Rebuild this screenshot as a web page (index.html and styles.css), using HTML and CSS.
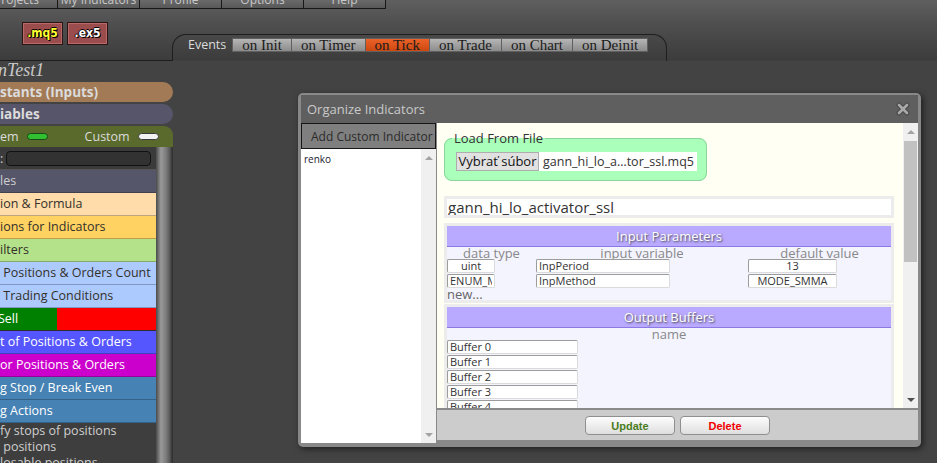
FILE: index.html
```html
<!DOCTYPE html>
<html>
<head>
  <title>Indicator Builder - Organize Indicators</title>
  <link rel="stylesheet" href="styles.css">
</head>
<body>
  <div class="menubar">
    <div class="menu-item first"><span>Projects</span></div>
    <div class="menu-item"><span>My Indicators</span></div>
    <div class="menu-item"><span>Profile</span></div>
    <div class="menu-item"><span>Options</span></div>
    <div class="menu-item"><span>Help</span></div>
  </div>

  <div class="toolbar">
    <div class="toolbar-left">
      <span class="filebtn mq5">.mq5</span>
      <span class="filebtn ex5">.ex5</span>
    </div>
    <div class="events-tab">
      <span class="events-label">Events</span>
      <button class="event">on Init</button>
      <button class="event">on Timer</button>
      <button class="event active">on Tick</button>
      <button class="event">on Trade</button>
      <button class="event">on Chart</button>
      <button class="event">on Deinit</button>
    </div>
  </div>

  <div class="sidebar">
    <div class="project-name">nTest1</div>
    <div class="group constants">stants (Inputs)</div>
    <div class="group variables">iables</div>
    <div class="group switch">
      <span>em</span><span class="pill on"></span>
      <span class="custom-label">Custom</span><span class="pill"></span>
    </div>
    <div class="sidebar-body">
      <div class="blocks">
        <div class="search">:<input type="text"></div>
        <div class="block b-vars">les</div>
        <div class="block b-expr">ion &amp; Formula</div>
        <div class="block b-cond">ions for Indicators</div>
        <div class="block b-filter">ilters</div>
        <div class="block b-check">&nbsp;Positions &amp; Orders Count</div>
        <div class="block b-check">&nbsp;Trading Conditions</div>
        <div class="block b-buysell"><span class="buy">Sell</span><span class="sell"></span></div>
        <div class="block b-list">t of Positions &amp; Orders</div>
        <div class="block b-loop">or Positions &amp; Orders</div>
        <div class="block b-trail">g Stop / Break Even</div>
        <div class="block b-trade">g Actions</div>
        <div class="action">fy stops of positions</div>
        <div class="action">&nbsp;positions</div>
        <div class="action">losable positions</div>
      </div>
      <div class="sidebar-scroll"></div>
    </div>
  </div>

  <div class="dialog">
    <div class="dialog-title">
      <span>Organize Indicators</span>
      <svg class="close" width="14" height="14" viewBox="0 0 14 14">
        <path d="M3 3 L11 11 M11 3 L3 11" stroke="#4a4a4a" stroke-width="5" stroke-linecap="round"/>
        <path d="M3 3 L11 11 M11 3 L3 11" stroke="#a9a9a9" stroke-width="2.6" stroke-linecap="round"/>
      </svg>
    </div>
    <div class="dialog-body">
      <div class="ind-column">
        <button class="add-custom">Add Custom Indicator</button>
        <div class="ind-list">
          <div class="ind-items">
            <div class="ind-item">renko</div>
          </div>
          <div class="scrollbar">
            <span class="arrow up"></span>
            <span class="spacer"></span>
            <span class="arrow down"></span>
          </div>
        </div>
      </div>

      <div class="editor">
        <div class="editor-view">
          <div class="editor-content">
            <fieldset class="load-file">
              <legend>Load From File</legend>
              <div class="file-input">
                <span class="file-btn">Vybrať súbor</span>
                <span class="file-name">gann_hi_lo_a…tor_ssl.mq5</span>
              </div>
            </fieldset>

            <input class="ind-name" type="text" value="gann_hi_lo_activator_ssl">

            <div class="section">
              <div class="section-head">Input Parameters</div>
              <div class="params">
                <div class="col-head">data type</div>
                <div class="col-head">input variable</div>
                <div class="col-head">default value</div>

                <div><input class="p-type" type="text" value="uint"></div>
                <div><input class="p-name" type="text" value="InpPeriod"></div>
                <div><input class="p-value" type="text" value="13"></div>

                <div><input class="p-type" type="text" value="ENUM_MA_METHOD"></div>
                <div><input class="p-name" type="text" value="InpMethod"></div>
                <div><input class="p-value" type="text" value="MODE_SMMA"></div>
              </div>
              <div class="new-link">new...</div>
            </div>

            <div class="section">
              <div class="section-head">Output Buffers</div>
              <div class="col-head">name</div>
              <input class="buffer" type="text" value="Buffer 0">
              <input class="buffer" type="text" value="Buffer 1">
              <input class="buffer" type="text" value="Buffer 2">
              <input class="buffer" type="text" value="Buffer 3">
              <input class="buffer" type="text" value="Buffer 4">
              <input class="buffer" type="text" value="Buffer 5">
            </div>
          </div>
          <div class="scrollbar">
            <span class="arrow up"></span>
            <span class="thumb"></span>
            <span class="spacer"></span>
            <span class="arrow down dark"></span>
          </div>
        </div>
        <div class="dialog-footer">
          <button class="footer-btn update">Update</button>
          <button class="footer-btn delete">Delete</button>
        </div>
      </div>
    </div>
  </div>
</body>
</html>
```

FILE: styles.css
```css
body {
  margin: 0;
  height: 463px;
  overflow: hidden;
  font-family: "Open Sans", "Noto Sans", sans-serif;
  background: #434343 linear-gradient(#5f5f5f 0, #4e4e4e 25px, #3c3c3c 60px, #434343 61px) no-repeat;
  background-size: 100% 100%;
}

/* top menu, mostly scrolled out of view */
.menubar {
  display: flex;
  height: 8px;
  width: 386px;
  border-bottom: 1px solid #181818;
  overflow: hidden;
}
.menu-item {
  width: 81px;
  flex: none;
  border-right: 1px solid #181818;
  background: linear-gradient(#6a6a6a, #585858);
  color: #c8c8c8;
  font-size: 12px;
  text-align: center;
  overflow: hidden;
}
.menu-item span {
  display: block;
  margin-top: -8px;
  line-height: 16px;
  white-space: nowrap;
}
.menu-item.first {
  margin-left: -24px;
}

/* toolbar with file buttons and event tabs */
.toolbar {
  display: flex;
  height: 52px;
}
.toolbar-left {
  width: 172px;
  height: 52px;
  box-sizing: border-box;
  border-bottom: 1px solid #1e1e1e;
  padding: 13px 0 0 22px;
  display: flex;
  gap: 4px;
  align-items: flex-start;
}
.filebtn {
  width: 41px;
  height: 23px;
  box-sizing: border-box;
  border: 1px solid #2a1414;
  box-shadow: inset 0 0 0 1px #b86a6a;
  background: #9b4d4d;
  font: bold 12px "DejaVu Sans Condensed", "DejaVu Sans", sans-serif;
  line-height: 21px;
  text-align: center;
  text-shadow: 1px 1px 0 #000, -1px 0 0 #000, 0 -1px 0 #000;
}
.mq5 { color: #ffff30; }
.ex5 { color: #ffffff; }

.events-tab {
  margin-top: 25px;
  width: 495px;
  height: 27px;
  box-sizing: border-box;
  border: 1px solid #1e1e1e;
  border-bottom: none;
  border-radius: 14px 14px 0 0;
  padding: 3px 0 0 15px;
  display: flex;
  align-items: flex-start;
}
.events-label {
  color: #dcdcdc;
  font-size: 12.5px;
  line-height: 13px;
  margin-right: 7px;
}
.event {
  font-family: "Liberation Serif", serif;
  font-size: 15px;
  line-height: 12px;
  height: 14px;
  padding: 0 9px;
  margin: 0 0 0 -1px;
  border: 1px solid #606060;
  background: linear-gradient(#b6b6b6, #8c8c8c);
  color: #1a1a1a;
}
.event.active {
  background: linear-gradient(#ec6228, #cc4810);
}

/* left side panel */
.sidebar {
  width: 173px;
  height: 402px;
  display: flex;
  flex-direction: column;
}
.sidebar > * {
  flex: none;
}
.project-name {
  height: 20px;
  line-height: 19px;
  font-family: "Liberation Serif", serif;
  font-style: italic;
  font-size: 18px;
  color: #c8c8c8;
  text-indent: -2px;
  overflow: hidden;
}
.group {
  height: 20px;
  line-height: 20px;
  font-size: 13.5px;
  font-weight: bold;
  color: #dcdcdc;
  border-radius: 0 10px 10px 0;
  margin-top: 1px;
  white-space: nowrap;
}
.constants { background: #a27a56; }
.variables { background: #56556a; margin-top: 2px; }
.switch {
  margin-top: 2px;
  height: 21px;
  line-height: 21px;
  border-radius: 0 9px 0 0;
  background: #5a6a2c;
  font-weight: normal;
  font-size: 12.5px;
  display: flex;
  align-items: center;
}
.pill {
  width: 21px;
  height: 7px;
  box-sizing: border-box;
  border-radius: 4px;
  border: 1px solid #3a3a3a;
  background: #f2f2f2;
}
.pill.on {
  background: #30c030;
  border-color: #184818;
  margin-left: 8px;
}
.custom-label {
  margin-left: 37px;
  margin-right: 8px;
}

.sidebar-body {
  flex: 1 1 0;
  min-height: 0;
  overflow: hidden;
  display: flex;
  background: #3e3e3e;
}
.blocks {
  width: 156px;
  font-size: 12.5px;
  white-space: nowrap;
  overflow: hidden;
}
.search {
  height: 22px;
  border-bottom: 1px solid #555;
  background: #3b3b3b;
  color: #cfcfcf;
  display: flex;
  align-items: center;
  gap: 3px;
}
.search input {
  width: 145px;
  height: 15px;
  box-sizing: border-box;
  border: 1px solid #111;
  border-radius: 4px;
  background: #323232;
  padding: 0;
}
.block {
  height: 22px;
  line-height: 22px;
  border-bottom: 1px solid rgba(0, 0, 0, 0.25);
  color: #33302a;
}
.b-vars { background: #56566a; color: #cfcfcf; }
.b-expr { background: #ffdcaa; }
.b-cond { background: #ffd262; }
.b-filter { background: #b3e28a; }
.b-check { background: #adcaff; }
.b-buysell { display: flex; color: #fff; }
.b-buysell .buy { width: 57px; background: #008000; text-indent: -2px; }
.b-buysell .sell { flex: 1; background: #ff0000; }
.b-list { background: #5656ff; color: #fff; }
.b-loop { background: #cc00cc; color: #fff; }
.b-trail { background: #4682b4; color: #fff; }
.b-trade { background: #4682b4; color: #fff; }
.action {
  line-height: 16px;
  color: #cfcfcf;
}
.sidebar-scroll {
  width: 17px;
  background: linear-gradient(to right, #4a4a4a 0, #6a6a6a 2px, #9a9a9a 5px, #7c7c7c 10px, #565656 14px, #333 16px, #333 17px);
}

/* Organize Indicators dialog */
.dialog {
  position: absolute;
  left: 298px;
  top: 93px;
  width: 623px;
  height: 354px;
  box-sizing: border-box;
  padding: 2px 3px 4px;
  background: #898989;
  border-radius: 5px;
  box-shadow: 2px 2px 6px rgba(0, 0, 0, 0.55);
  display: flex;
  flex-direction: column;
}
.dialog-title {
  height: 28px;
  flex: none;
  background: #5f5f5f;
  display: flex;
  align-items: center;
  justify-content: space-between;
  padding: 0 8px 0 6px;
  color: #c9c9c9;
  font-size: 13px;
}
.dialog-body {
  flex: 1;
  display: flex;
  gap: 1px;
  min-height: 0;
}
.ind-column {
  width: 135px;
  display: flex;
  flex-direction: column;
}
.add-custom {
  height: 26px;
  flex: none;
  border: 1px solid #161616;
  background: #7f7f7f;
  color: #2b2b2b;
  font-family: "Open Sans", sans-serif;
  font-size: 12px;
  white-space: nowrap;
  text-align: left;
  padding: 0 0 0 9px;
}
.ind-list {
  flex: 1;
  display: flex;
  background: #fff;
}
.ind-items {
  flex: 1;
  padding: 3px 0 0 3px;
  font-size: 10px;
  color: #202030;
}
.scrollbar {
  width: 15px;
  flex: none;
  background: #f0f0f0;
  display: flex;
  flex-direction: column;
  align-items: center;
}
.arrow {
  width: 15px;
  height: 17px;
  display: flex;
  align-items: center;
  justify-content: center;
}
.arrow::after {
  content: "";
  border-left: 4px solid transparent;
  border-right: 4px solid transparent;
}
.arrow.up::after { border-bottom: 4px solid #a3a3a3; }
.arrow.down::after { border-top: 4px solid #a3a3a3; }
.arrow.down.dark::after { border-top-color: #505050; }
.spacer { flex: 1; }
.thumb {
  width: 13px;
  height: 121px;
  margin-top: 1px;
  background: #c1c1c1;
}

.editor {
  flex: 1;
  display: flex;
  flex-direction: column;
  margin-bottom: 3px;
}
.editor-view {
  flex: 1;
  display: flex;
  min-height: 0;
  background: #fffff4;
}
.editor-content {
  flex: 1;
  overflow: hidden;
  padding: 7px 9px 0 7px;
}

.load-file {
  margin: 0;
  width: 263px;
  box-sizing: border-box;
  padding: 6px 9px 9px 11px;
  border: 1px solid #8bd49b;
  border-radius: 8px;
  background: #aaffbb;
}
.load-file legend {
  padding: 0 2px;
  margin-left: -4px;
  font-size: 13px;
  line-height: 16px;
  color: #333;
}
.file-input {
  display: flex;
  height: 19px;
  font-size: 13px;
}
.file-btn {
  width: 83px;
  flex: none;
  box-sizing: border-box;
  border: 1px solid #adadad;
  background: #e1e1e1;
  color: #111;
  line-height: 17px;
  text-align: center;
}
.file-name {
  flex: 1;
  background: #fff;
  color: #333;
  font-size: 12.5px;
  line-height: 19px;
  padding-left: 4px;
  white-space: nowrap;
  overflow: hidden;
}

.ind-name {
  display: block;
  margin-top: 15px;
  width: 450px;
  height: 22px;
  box-sizing: border-box;
  border: 3px solid #ececec;
  padding: 0 1px;
  font-family: "Open Sans", sans-serif;
  font-size: 15px;
  color: #333;
  background: #fff;
}

.section {
  margin-top: 5px;
  width: 450px;
  box-sizing: border-box;
  border: 3px solid #ececec;
  background: #f4f4ff;
}
.section + .section { margin-top: 1px; }
.section-head {
  height: 20px;
  line-height: 20px;
  background: #b9a9ff;
  border-bottom: 1px solid #8d79e6;
  color: #fff;
  text-align: center;
  font-size: 13px;
  text-shadow: 1px 1px 2px #444;
}
.col-head {
  font-size: 13px;
  line-height: 12px;
  color: #888;
  text-align: center;
}
.params {
  display: grid;
  grid-template-columns: 89px 212px 1fr;
}
.params input,
.buffer {
  display: block;
  height: 14px;
  box-sizing: border-box;
  margin-bottom: 1px;
  padding: 0 2px 2px;
  border: 1px solid #dadada;
  border-top-color: #9c9c9c;
  border-left-color: #9c9c9c;
  border-radius: 2px;
  background: #fff;
  font-family: "Open Sans", sans-serif;
  font-size: 11px;
  line-height: 10px;
  color: #333;
}
.p-type { width: 48px; text-align: center; }
.p-name { width: 134px; }
.p-value { width: 89px; text-align: center; }
.buffer { width: 131px; }
.new-link {
  font-size: 13px;
  line-height: 11px;
  color: #666;
}

.dialog-footer {
  height: 32px;
  box-sizing: border-box;
  border-top: 2px solid #8a8a8a;
  background: #cccccc;
  display: flex;
  justify-content: center;
  gap: 5px;
  padding-top: 6px;
}
.footer-btn {
  width: 90px;
  height: 19px;
  border: 1px solid #8f8f8f;
  border-radius: 4px;
  background: linear-gradient(#fdfdfd, #dedede);
  font: bold 11px "Liberation Sans", Arial, sans-serif;
  padding: 0;
}
.update { color: #4a7d1d; }
.delete { color: #f00000; }
```
